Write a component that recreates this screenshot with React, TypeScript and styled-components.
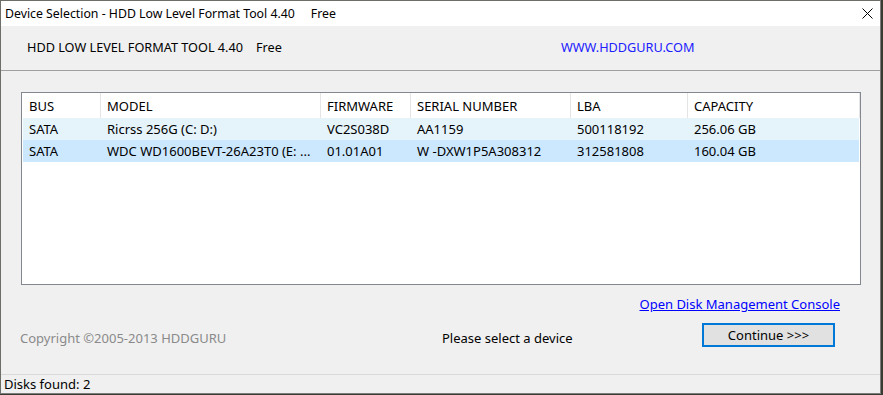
import styled, { createGlobalStyle } from "styled-components";

const GlobalStyle = createGlobalStyle`
  html, body {
    margin: 0;
    padding: 0;
    background: #3c3b31;
  }
  * {
    box-sizing: border-box;
  }
`

const columns = [
  {title: 'BUS', width: 78},
  {title: 'MODEL', width: 220},
  {title: 'FIRMWARE', width: 90},
  {title: 'SERIAL NUMBER', width: 160},
  {title: 'LBA', width: 117},
  {title: 'CAPACITY', width: 172},
]

const disks = [
  ['SATA', 'Ricrss 256G (C: D:)', 'VC2S038D', 'AA1159', '500118192', '256.06 GB'],
  ['SATA', 'WDC WD1600BEVT-26A23T0 (E: ...', '01.01A01', 'W -DXW1P5A308312', '312581808', '160.04 GB'],
]

const gridCols = columns.map(c => c.width + 'px').join(' ')

const Window = styled.div`
  width: 881px;
  height: 394px;
  border: 1px solid #6e6e68;
  border-right-color: #7d7d7d;
  border-bottom-color: #7d7d7d;
  background: #f0f0f0;
  display: flex;
  flex-direction: column;
  font-family: "Noto Sans", "Open Sans", sans-serif;
  font-size: 13px;
  color: #000;
`

const TitleBar = styled.div`
  height: 25px;
  background: #fff;
  display: flex;
  align-items: center;
  justify-content: space-between;
  padding: 0 7px 0 4px;
  font-size: 12.3px;
`

const TitleText = styled.span`
  span {
    margin-left: 16px;
  }
`

const Banner = styled.div`
  height: 45px;
  border-bottom: 1px solid #a0a0a0;
  display: flex;
  align-items: center;
  padding: 0 0 2px 26px;
  font-size: 12.7px;
`

const BannerTitle = styled.div`
  width: 534px;
  span {
    margin-left: 13px;
  }
`

const SiteLink = styled.span`
  color: #2020ff;
`

const ListBox = styled.div`
  margin: 21px 19px 0 20px;
  height: 193px;
  border: 1px solid #828790;
  background: #fff;
`

const Row = styled.div<{ $bg?: string }>`
  display: grid;
  grid-template-columns: ${gridCols};
  height: ${p => p.$bg ? 22 : 25}px;
  margin: 0 1px;
  background: ${p => p.$bg || 'transparent'};
  align-items: center;
`

const HeadCell = styled.div`
  height: 100%;
  display: flex;
  align-items: center;
  padding-left: 6px;
  border-right: 1px solid #e5e5e5;
  white-space: nowrap;
`

const Cell = styled.div`
  padding-left: 6px;
  white-space: nowrap;
  overflow: hidden;
`

const LinkRow = styled.div`
  display: flex;
  justify-content: flex-end;
  padding-right: 40px;
  margin-top: 10px;
  line-height: 18px;
`

const ConsoleLink = styled.a`
  color: #0000ff;
  text-decoration: underline;
  cursor: pointer;
`

const ActionRow = styled.div`
  display: grid;
  grid-template-columns: 422px 260px 133px;
  padding-left: 19px;
  margin-top: 10px;
  align-items: start;
`

const Note = styled.div<{ $muted?: boolean }>`
  padding-top: 6px;
  line-height: 18px;
  color: ${p => p.$muted ? '#8a8a8a' : '#000'};
  white-space: nowrap;
`

const Button = styled.button`
  height: 24px;
  width: 133px;
  border: 2px solid #0078d7;
  background: #e1e1e1;
  font-family: inherit;
  font-size: 13px;
  color: #000;
  padding: 0;
`

const StatusBar = styled.div`
  margin-top: auto;
  height: 19px;
  border-top: 1px solid #d9d9d9;
  padding-left: 3px;
  line-height: 18px;
`

const CloseIcon = () => (
  <svg width="11" height="11" viewBox="0 0 11 11">
    <path d="M0.5 0.5 L10.5 10.5 M10.5 0.5 L0.5 10.5" stroke="#000" strokeWidth="1" fill="none"/>
  </svg>
)

const App = () => {
  return (
    <>
      <GlobalStyle/>
      <Window>
        <TitleBar>
          <TitleText>Device Selection - HDD Low Level Format Tool 4.40<span>Free</span></TitleText>
          <CloseIcon/>
        </TitleBar>
        <Banner>
          <BannerTitle>HDD LOW LEVEL FORMAT TOOL 4.40<span>Free</span></BannerTitle>
          <SiteLink>WWW.HDDGURU.COM</SiteLink>
        </Banner>
        <ListBox>
          <Row>
            {columns.map(c => <HeadCell key={c.title}>{c.title}</HeadCell>)}
          </Row>
          {disks.map((d, idx) =>
            <Row key={idx} $bg={idx === 0 ? '#e5f3fb' : '#cce8ff'}>
              {d.map((v, i) => <Cell key={i}>{v}</Cell>)}
            </Row>
          )}
        </ListBox>
        <LinkRow>
          <ConsoleLink>Open Disk Management Console</ConsoleLink>
        </LinkRow>
        <ActionRow>
          <Note $muted>Copyright ©2005-2013 HDDGURU</Note>
          <Note>Please select a device</Note>
          <Button>Continue &gt;&gt;&gt;</Button>
        </ActionRow>
        <StatusBar>Disks found: 2</StatusBar>
      </Window>
    </>
  );
};

export default App;
